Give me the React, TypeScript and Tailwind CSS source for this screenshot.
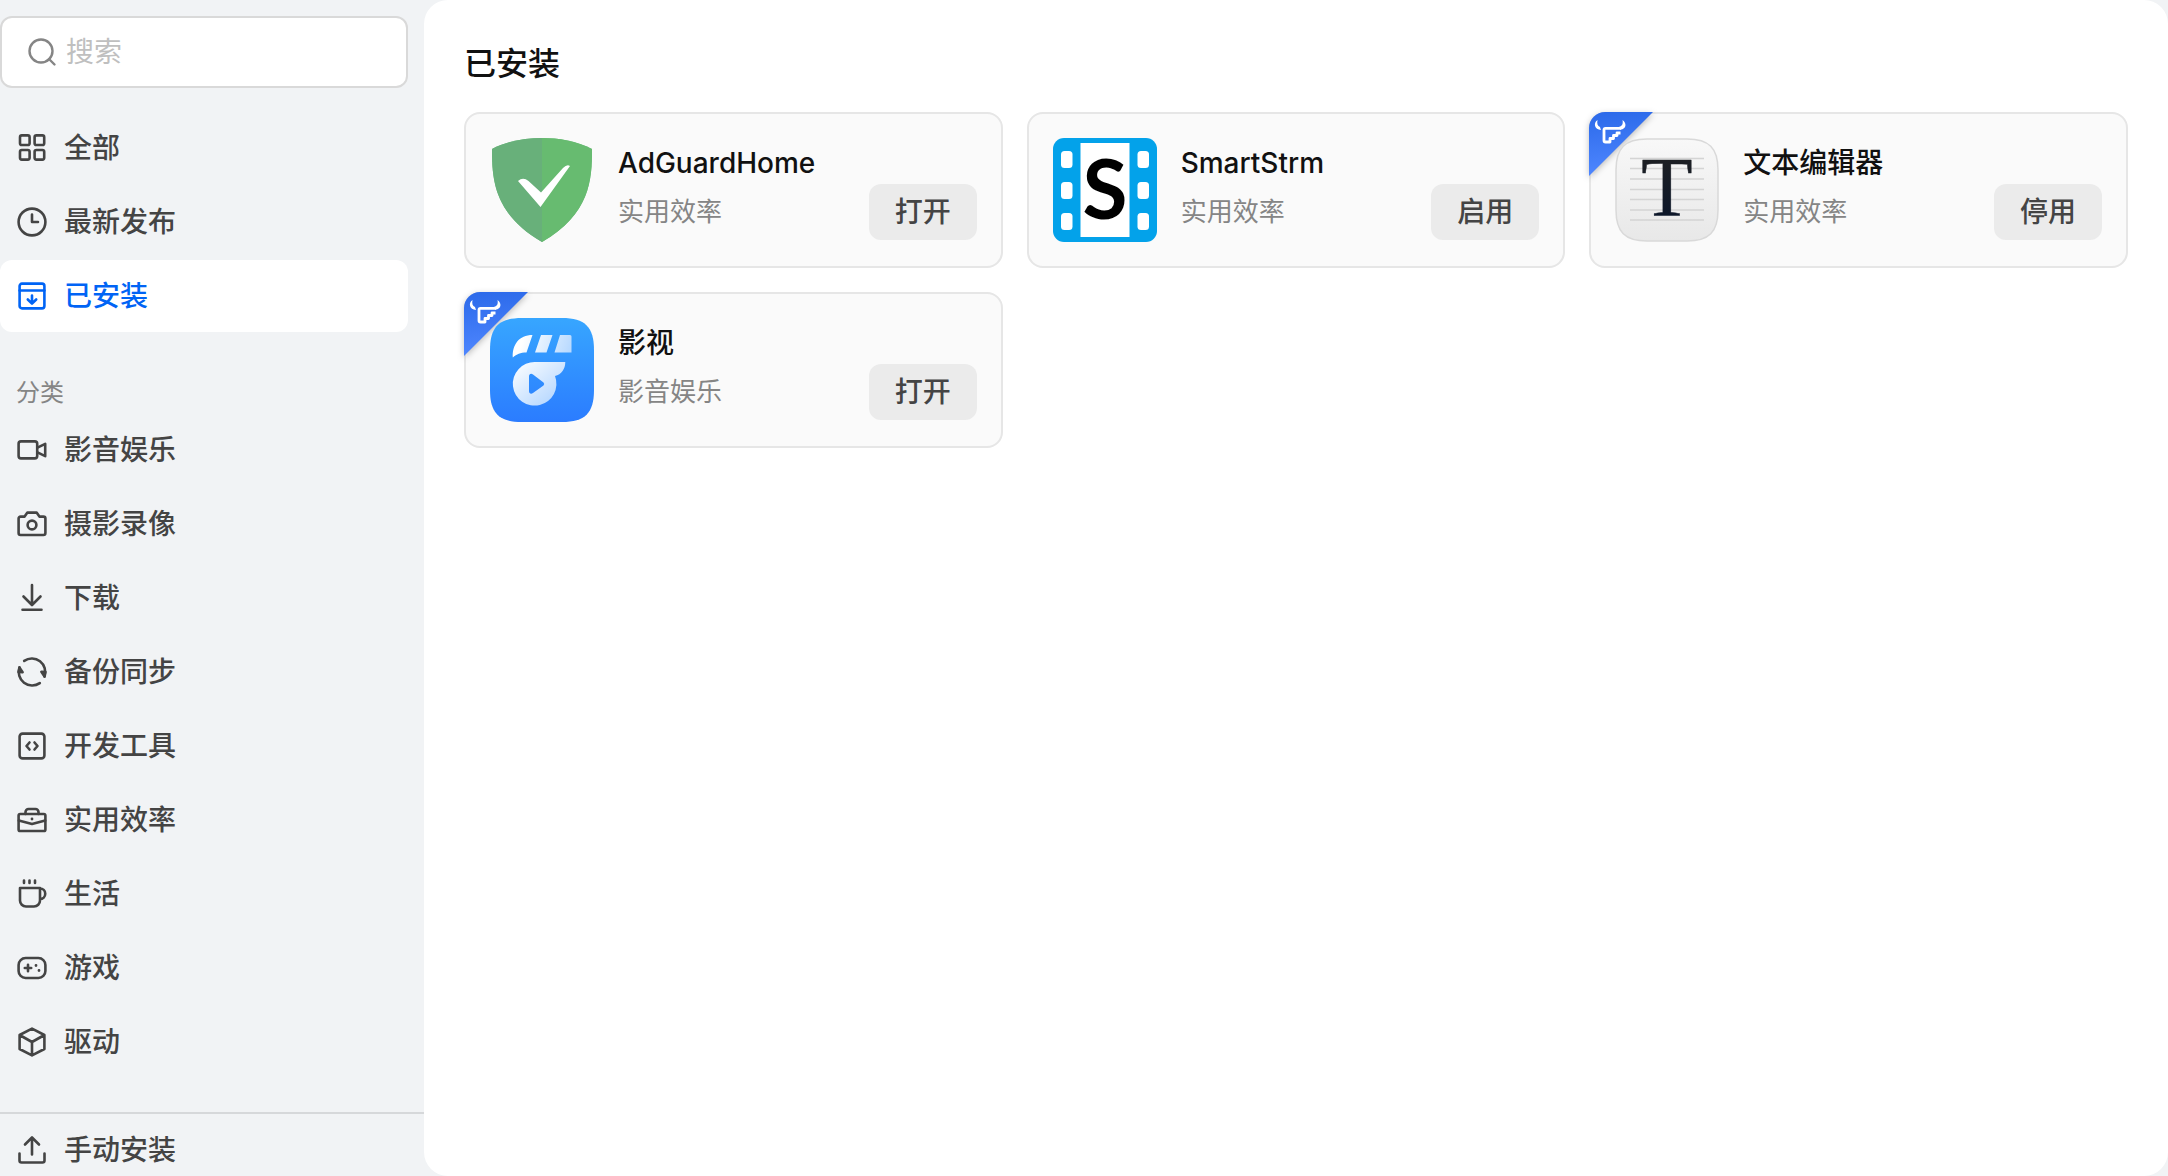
import React from "react";

type IconProps = { className?: string };

function Glyph({ children }: { children: React.ReactNode }) {
  return (
    <svg
      viewBox="0 0 32 32"
      className="size-8 shrink-0"
      fill="none"
      stroke="currentColor"
      strokeWidth="2.6"
      strokeLinecap="round"
      strokeLinejoin="round"
      aria-hidden="true"
    >
      {children}
    </svg>
  );
}

const icons = {
  all: (
    <Glyph>
      <rect x="4" y="3.4" width="9.600" height="9.600" rx="1.8" />
      <rect x="18.6" y="3.4" width="9.600" height="9.600" rx="1.8" />
      <rect x="4" y="18" width="9.600" height="9.600" rx="1.8" />
      <rect x="18.6" y="18" width="9.600" height="9.600" rx="1.8" />
    </Glyph>
  ),
  clock: (
    <Glyph>
      <circle cx="16" cy="16" r="13.4" />
      <path d="M16 8.5V16H22" />
    </Glyph>
  ),
  installed: (
    <Glyph>
      <rect x="3.6" y="3.6" width="24.8" height="24.8" rx="2.4" />
      <path d="M3.6 10.5H28.4M16 15.500V23.2M11.800 19.5L16 23.6L20.200 19.5" />
    </Glyph>
  ),
  video: (
    <Glyph>
      <rect x="2.6" y="7.4" width="18.6" height="17" rx="2.4" />
      <path d="M21.5 13.6L29.2 9.8V22.2L21.5 18.4" />
    </Glyph>
  ),
  camera: (
    <Glyph>
      <path d="M4.6 8.6H8.6L11.4 4.6H20.6L23.4 8.6H27.4A2 2 0 0 1 29.4 10.600V25A2 2 0 0 1 27.400 27H4.600A2 2 0 0 1 2.600 25V10.600A2 2 0 0 1 4.600 8.600Z" />
      <circle cx="16" cy="17" r="4.4" />
    </Glyph>
  ),
  download: (
    <Glyph>
      <path d="M16 3V22.500M7.500 14.500L16 23L24.500 14.500M6.500 27.800H25.500" />
    </Glyph>
  ),
  sync: (
    <Glyph>
      <path d="M8.200 4.900A13.400 13.400 0 0 1 28.400 20.500M23.800 27.100A13.400 13.400 0 0 1 3.600 11.500" />
      <path d="M28.600 20.600L25.400 15.800L29.400 16ZM3.400 11.400L6.600 16.200L2.600 16Z" fill="currentColor" />
    </Glyph>
  ),
  code: (
    <Glyph>
      <rect x="3.600" y="3.600" width="24.800" height="24.800" rx="3" />
      <path d="M13.500 12.500L10.500 16L13.500 19.500M18.500 12.500L21.500 16L18.500 19.500" />
    </Glyph>
  ),
  briefcase: (
    <Glyph>
      <rect x="2.600" y="10" width="26.800" height="17" rx="1.600" />
      <path d="M9.500 10V8A3 3 0 0 1 12.500 5H19.500A3 3 0 0 1 22.500 8V10M2.800 16.500L16 20L29.200 16.500" />
      <path d="M16 15V15.100" strokeWidth="2.800" />
    </Glyph>
  ),
  cup: (
    <Glyph>
      <path d="M4 10H24V22.500A6 6 0 0 1 18 28.500H10A6 6 0 0 1 4 22.500ZM24 10.500A5.200 5.200 0 0 1 24 21M8 2.500V5M13.500 2.500V5M19 2.500V5" />
    </Glyph>
  ),
  game: (
    <Glyph>
      <rect x="2.600" y="6" width="26.800" height="20" rx="7" />
      <path d="M12 12.800V19.200M8.800 16H15.200" />
      <path d="M20 13.400V13.500M23 18.500V18.600" strokeWidth="2.800" />
    </Glyph>
  ),
  cube: (
    <Glyph>
      <path d="M16 2.600L28.400 9V23L16 29.400L3.600 23V9ZM3.600 9L16 16L28.400 9M16 16V29.400" />
    </Glyph>
  ),
  upload: (
    <Glyph>
      <path d="M16 20.500V4M9 10.500L16 3.500L23 10.500M3.500 19.500V26.500A2 2 0 0 0 5.500 28.500H26.500A2 2 0 0 0 28.500 26.500V19.500" />
    </Glyph>
  ),
};

type Item = { label: string; icon: React.ReactNode; active?: boolean };

const topItems: Item[] = [
  { label: "全部", icon: icons.all },
  { label: "最新发布", icon: icons.clock },
  { label: "已安装", icon: icons.installed, active: true },
];

const categories: Item[] = [
  { label: "影音娱乐", icon: icons.video },
  { label: "摄影录像", icon: icons.camera },
  { label: "下载", icon: icons.download },
  { label: "备份同步", icon: icons.sync },
  { label: "开发工具", icon: icons.code },
  { label: "实用效率", icon: icons.briefcase },
  { label: "生活", icon: icons.cup },
  { label: "游戏", icon: icons.game },
  { label: "驱动", icon: icons.cube },
];

function NavItem({ label, icon, active }: Item) {
  return (
    <button
      type="button"
      aria-current={active ? "page" : undefined}
      className={
        active
          ? "flex h-18 w-full items-center gap-4 rounded-xl bg-white px-4 text-left text-[#0064f5]"
          : "flex h-18 w-full items-center gap-4 rounded-xl px-4 text-left text-[#444444]"
      }
    >
      {icon}
      <span className="text-[28px] leading-10 font-medium">{label}</span>
    </button>
  );
}

function AdGuardLogo({ className }: IconProps) {
  return (
    <svg viewBox="0 0 104 104" className={className} aria-hidden="true">
      <path d="M52 0C36 0 17 3 2 11C2 42 4 76 52 104C100 76 102 42 102 11C87 3 68 0 52 0Z" fill="#67b979" />
      <path d="M52 0C36 0 17 3 2 11C2 42 4 76 52 104Z" fill="#68b07a" />
      <path d="M52 0C68 0 87 3 102 11C102 42 100 76 52 104Z" fill="#67bb70" />
      <path d="M50.500 69L28 43Q33 38.500 38.500 43L51 54.500L73 30Q77 26 80 28Z" fill="#fff" />
    </svg>
  );
}

function SmartStrmLogo({ className }: IconProps) {
  return (
    <svg viewBox="0 0 104 104" className={className} aria-hidden="true">
      <rect width="104" height="104" rx="11" fill="#03a2ea" />
      <rect x="27.500" y="5" width="49" height="94" fill="#fff" />
      {[13, 44, 75].map((y) => (
        <g key={y} fill="#fff">
          <rect x="8" y={y} width="11.500" height="17" rx="3.500" />
          <rect x="84.500" y={y} width="11.500" height="17" rx="3.500" />
        </g>
      ))}
      <text
        x="52"
        y="81"
        textAnchor="middle"
        fontFamily="Lato, sans-serif"
        fontWeight="700"
        fontSize="82"
        fill="#000"
      >
        S
      </text>
    </svg>
  );
}

function TextEditorLogo({ className }: IconProps) {
  return (
    <svg viewBox="0 0 104 104" className={className} aria-hidden="true">
      <defs>
        <linearGradient id="paper" x1="0" y1="0" x2="0" y2="1">
          <stop offset="0" stopColor="#f8f8f8" />
          <stop offset="1" stopColor="#e8e8e8" />
        </linearGradient>
        <linearGradient id="ink" x1="0" y1="0" x2="0" y2="1">
          <stop offset="0" stopColor="#222" />
          <stop offset="1" stopColor="#07142b" />
        </linearGradient>
      </defs>
      <path
        d="M32 1H72C94 1 103 10 103 32V72C103 94 94 103 72 103H32C10 103 1 94 1 72V32C1 10 10 1 32 1Z"
        fill="url(#paper)"
        stroke="#d9d9d9"
        strokeWidth="1.500"
      />
      <path
        d="M15 20.500H89M15 30.500H89M15 41H89M15 51.500H89M15 61.500H89M15 72H89M15 82H89"
        stroke="#d4d4d4"
        strokeWidth="1.300"
      />
      <text
        x="52"
        y="78"
        textAnchor="middle"
        fontFamily="Liberation Serif, serif"
        fontSize="84"
        fill="url(#ink)"
        stroke="url(#ink)"
        strokeWidth="0.500"
        strokeLinejoin="round"
      >
        T
      </text>
    </svg>
  );
}

function VideoLogo({ className }: IconProps) {
  return (
    <svg viewBox="0 0 104 104" className={className} aria-hidden="true">
      <defs>
        <linearGradient id="sky" x1="0" y1="0" x2="0" y2="1">
          <stop offset="0" stopColor="#37a6ff" />
          <stop offset="1" stopColor="#2b7cff" />
        </linearGradient>
        <linearGradient id="mist" x1="0" y1="0" x2="1" y2="1">
          <stop offset="0" stopColor="#fff" />
          <stop offset="1" stopColor="#a9d0ff" />
        </linearGradient>
        <linearGradient id="strip" gradientUnits="userSpaceOnUse" x1="34" y1="18" x2="82" y2="34">
          <stop offset="0" stopColor="#fff" />
          <stop offset="1" stopColor="#b5d8ff" />
        </linearGradient>
      </defs>
      <path
        d="M32 0H72C95 0 104 9 104 32V72C104 95 95 104 72 104H32C9 104 0 95 0 72V32C0 9 9 0 32 0Z"
        fill="url(#sky)"
      />
      <path d="M42.500 17L36.500 34.500C30 34.500 27 36 22.800 39.500C22 27 29 17 42.500 17ZM51 17H62.500L56.500 34.500H45ZM70 17H80Q81.500 17 81.500 18.500V34.500H64.500Z" fill="url(#strip)" />
      <path
        fillRule="evenodd"
        d="M45 44H75.300C75.300 51 71.500 56.500 65 58A21.800 21.800 0 1 1 45 44ZM39 58.500V73C39 75.500 41 76.500 43 75L53.500 67.500Q55 66 53.500 64.500L43 56.500C41 55 39 56 39 58.500Z"
        fill="url(#mist)"
      />
    </svg>
  );
}

function OfficialBadge() {
  return (
    <svg
      viewBox="0 0 64 64"
      className="absolute -top-0.5 -left-0.5 size-16 drop-shadow-[0_2px_3px_rgba(0,0,0,0.25)]"
      role="img"
      aria-label="官方应用"
    >
      <defs>
        <linearGradient id="ribbon" x1="0.300" y1="0" x2="0.400" y2="1">
          <stop offset="0" stopColor="#2c6aea" />
          <stop offset="1" stopColor="#4f87ff" />
        </linearGradient>
      </defs>
      <path d="M0 64V16A16 16 0 0 1 16 0H64Z" fill="url(#ribbon)" />
      <path
        d="M8.500 8C4 11 5.500 17.500 12 18L11 15C8.500 14 7.800 11.500 8.500 8ZM33.500 8C38 11 37.500 17 31.500 17.800L29 15.200C33.500 14.500 34.200 11.500 33.500 8Z"
        fill="#fff"
      />
      <path
        d="M32 16.300H16.500Q15 16.300 15 17.800V28.500Q15 30 16.500 30H21V26.500H24.500V23.500H28V21H31.500"
        fill="none"
        stroke="#fff"
        strokeWidth="2.800"
        strokeLinejoin="round"
      />
    </svg>
  );
}

type AppInfo = {
  name: string;
  category: string;
  action: string;
  official?: boolean;
  Logo: (props: IconProps) => React.ReactElement;
};

const apps: AppInfo[] = [
  { name: "AdGuardHome", category: "实用效率", action: "打开", Logo: AdGuardLogo },
  { name: "SmartStrm", category: "实用效率", action: "启用", Logo: SmartStrmLogo },
  { name: "文本编辑器", category: "实用效率", action: "停用", official: true, Logo: TextEditorLogo },
  { name: "影视", category: "影音娱乐", action: "打开", official: true, Logo: VideoLogo },
];

function AppCard({ name, category, action, official, Logo }: AppInfo) {
  return (
    <li className="relative flex items-start gap-6 rounded-2xl border-2 border-[#e6e6e6] bg-[#fafafa] p-6">
      {official && <OfficialBadge />}
      <Logo className="relative size-26 shrink-0" />
      <div className="flex min-w-0 grow flex-col pt-1">
        <h2 className="text-[28px] leading-[42px] font-medium text-[#111111]">{name}</h2>
        <div className="flex items-center justify-between">
          <p className="text-[26px] leading-10 text-[#858585]">{category}</p>
          <button
            type="button"
            className="h-14 w-27 rounded-xl bg-[#ebebeb] text-[28px] leading-10 font-medium text-[#444444]"
          >
            {action}
          </button>
        </div>
      </div>
    </li>
  );
}

export default function App() {
  return (
    <div className="flex h-screen overflow-hidden bg-[#f1f3f5] font-[Inter,'Noto_Sans_CJK_SC',sans-serif]">
      <aside className="flex w-106 shrink-0 flex-col">
        <div className="flex min-h-0 grow flex-col overflow-hidden pt-4 pr-4">
          <label className="flex h-18 shrink-0 items-center gap-2 rounded-xl border-2 border-[#d9d9d9] bg-white px-6">
            <svg
              viewBox="0 0 32 32"
              className="size-8 shrink-0 text-[#858585]"
              fill="none"
              stroke="currentColor"
              strokeWidth="2.400"
              strokeLinecap="round"
              aria-hidden="true"
            >
              <circle cx="15" cy="15" r="11.500" />
              <path d="M23 23L28.500 28.500" />
            </svg>
            <input
              type="search"
              aria-label="搜索"
              placeholder="搜索"
              className="min-w-0 grow bg-transparent text-[28px] leading-10 text-[#444444] outline-none placeholder:text-[#bfbfbf]"
            />
          </label>
          <nav className="mt-6 flex flex-col gap-0.5">
            {topItems.map((item) => (
              <NavItem key={item.label} {...item} />
            ))}
            <h2 className="mt-10 px-4 text-2xl leading-[38px] text-[#858585]">分类</h2>
            {categories.map((item) => (
              <NavItem key={item.label} {...item} />
            ))}
          </nav>
        </div>
        <div className="h-16 shrink-0 border-t-2 border-[#d6d8da]">
          <NavItem label="手动安装" icon={icons.upload} />
        </div>
      </aside>
      <main className="min-w-0 grow overflow-y-auto rounded-3xl bg-white px-10 pt-10">
        <h1 className="text-[32px] leading-12 font-medium text-[#111111]">已安装</h1>
        <ul className="mt-6 grid grid-cols-3 gap-6">
          {apps.map((app) => (
            <AppCard key={app.name} {...app} />
          ))}
        </ul>
      </main>
    </div>
  );
}
